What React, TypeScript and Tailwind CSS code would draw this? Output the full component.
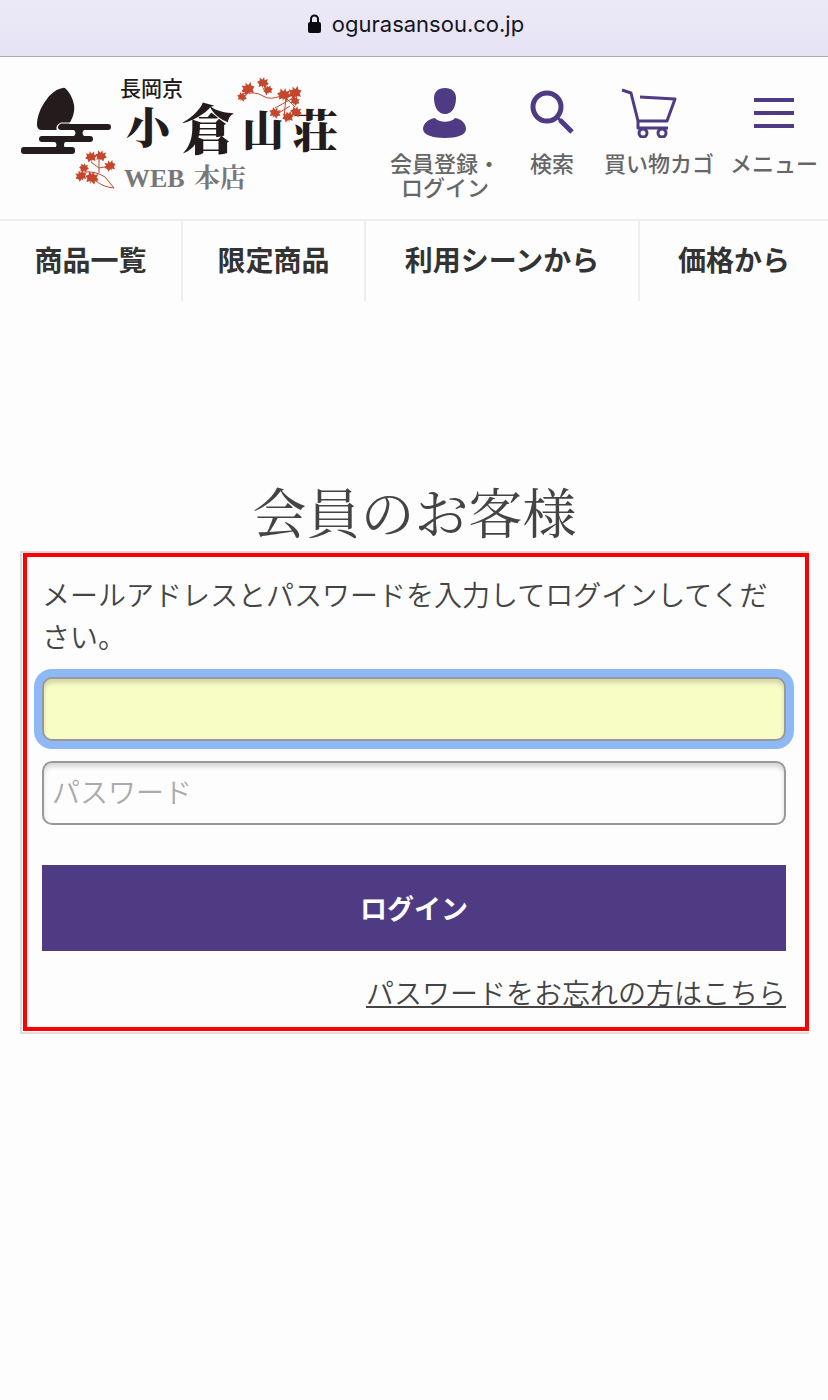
import { useState } from 'react'

const categories = ['商品一覧', '限定商品', '利用シーンから', '価格から']

function Leaf({ x, y, r = 0, s = 6 }: { x: number; y: number; r?: number; s?: number }) {
  return (
    <path
      d="M0-10 2-5 7-8 6-3 10 0 6 3 6 8 1 5 0 9-1 5-6 8-6 3-10 0-6-3-7-8-2-5Z"
      fill="#c4472b"
      transform={`translate(${x} ${y}) rotate(${r}) scale(${s / 10})`}
    />
  )
}

function Logo() {
  return (
    <svg viewBox="0 0 320 120" className="w-80 h-30 shrink-0" role="img" aria-label="長岡京 小倉山荘 WEB本店">
      {/* hill and mist */}
      <g fill="#231b1c">
        <path d="M43 15C37 16 31 20 27 26C20 35 17 44 17 52Q17 57 22 57H37V53Q38 51 41 51H49C53 45 55 38 54 32C53 25 49 19 46 16Q44 14 43 15Z" />
        <rect x="38" y="51" width="53" height="6" rx="3" />
        <rect x="19" y="63" width="54" height="6" rx="3" />
        <rect x="1" y="74" width="54" height="7" rx="3" />
        <path d="M54 57H64Q61 60 64 63H54Q57 60 54 57ZM35 69H45Q43 72 45 75H35Q38 72 35 69Z" />
      </g>
      <path d="M37 58V54Q38 51 41 50H52" fill="none" stroke="#fdfdfd" />

      <g fill="#231b1c">
        <text x="100" y="23" fontSize="21" fontWeight="500" className="font-['Noto_Sans_CJK_JP',sans-serif]">
          長岡京
        </text>
        <g fontWeight="900" className="font-['Noto_Serif_CJK_JP','Noto_Sans_CJK_JP',serif]">
          <text x="106" y="71" fontSize="44">小</text>
          <text x="161" y="77" fontSize="54">倉</text>
          <text x="222" y="73" fontSize="42">山</text>
          <text x="273" y="75" fontSize="45">荘</text>
        </g>
      </g>

      {/* maple branches */}
      <g fill="none" stroke="#c4472b">
        <path d="M222 21Q236 18 243 23T263 22L275 34M243 15 247 22M266 23 264 46M255 35 275 24M257 41 270 33" />
        <path d="M71 89 79 95 90 93M64 99Q76 98 85 104L94 115Q83 114 76 108M79 85V100" />
      </g>
      <Leaf x={243} y={10} r={10} s={6} />
      <Leaf x={228} y={16} r={-20} s={7} />
      <Leaf x={222} y={24} r={20} s={5} />
      <Leaf x={248} y={17} r={-15} s={5} />
      <Leaf x={264} y={22} r={12} s={7} />
      <Leaf x={275} y={20} r={-20} s={7} />
      <Leaf x={275} y={28} r={30} s={5} />
      <Leaf x={255} y={40} r={24} s={6} />
      <Leaf x={276} y={39} r={15} s={6} />
      <Leaf x={268} y={44} r={-15} s={6} />
      <Leaf x={71} y={84} r={-12} s={6} />
      <Leaf x={81} y={83} r={14} s={6} />
      <Leaf x={90} y={93} r={-20} s={6} />
      <Leaf x={64} y={95} r={10} s={5} />
      <Leaf x={61} y={103} r={-25} s={6} />
      <Leaf x={72} y={105} r={18} s={7} />

      <g fill="#777" fontWeight="700" className="font-['Liberation_Serif','Noto_Serif_CJK_JP','Noto_Sans_CJK_JP',serif]">
        <text x="104" y="114" fontSize="26">WEB</text>
        <text x="174" y="114" fontSize="26">本店</text>
      </g>
    </svg>
  )
}

function UserIcon() {
  return (
    <svg viewBox="0 0 44 50" className="w-11 h-[50px]" fill="#4e3b84" aria-hidden="true">
      <path d="M22 0C29 0 33 4 33 10 33 19 29 26 22 26S11 19 11 10C11 4 15 0 22 0Z" />
      <path d="M12 30C16 35 28 35 32 30 39 31 43 36 43 41 43 47 34 50 22 50S0 47 0 41C0 36 5 31 12 30Z" />
    </svg>
  )
}

function SearchIcon() {
  return (
    <svg viewBox="0 0 44 50" className="w-11 h-[50px]" fill="none" stroke="#4e3b84" aria-hidden="true">
      <circle cx="17" cy="19" r="14" strokeWidth="5" />
      <path d="M27 29 32 34" strokeWidth="3" />
      <path d="M30 32 42 44" strokeWidth="5" />
    </svg>
  )
}

function CartIcon() {
  return (
    <svg viewBox="0 0 56 50" className="w-14 h-[50px] mr-5" fill="none" stroke="#4e3b84" strokeWidth="3" aria-hidden="true">
      <path d="M1 2 10 5 17 33H46L54 11 19 9M17 33V40H47" strokeLinejoin="round" />
      <circle cx="22" cy="45" r="4" />
      <circle cx="41" cy="45" r="4" />
    </svg>
  )
}

function MenuIcon() {
  return (
    <svg viewBox="0 0 40 50" className="w-10 h-[50px]" fill="#4e3b84" aria-hidden="true">
      <path d="M0 10H40V14H0ZM0 23H40V27H0ZM0 36H40V40H0Z" />
    </svg>
  )
}

export default function App() {
  const [email, setEmail] = useState('')
  const [password, setPassword] = useState('')

  return (
    <div className="min-h-screen bg-[#fdfdfd] text-[#444] font-['Noto_Sans_CJK_JP',sans-serif]">
      <div className="h-[57px] flex items-center justify-center gap-[10px] pl-1 pb-2 border-b border-[#aaa] bg-linear-to-b from-[#ebe9f7] to-[#e7e3f4]">
        <svg viewBox="0 0 14 20" className="w-3.5 h-5" aria-hidden="true">
          <rect y="8" width="13" height="11" rx="2" fill="#0a0a0f" />
          <path d="M3 9V5a3.5 3.5 0 0 1 7 0V9" fill="none" stroke="#0a0a0f" strokeWidth="2" />
        </svg>
        <span className="text-[22px] text-[#15151c] font-['Inter',sans-serif]">ogurasansou.co.jp</span>
      </div>

      <header className="flex justify-between items-start pl-5 pr-[10px] pb-[21px] border-b-2 border-[#eee]">
        <a href="#" className="pt-4">
          <Logo />
        </a>
        <ul className="flex gap-4 pt-[31px] text-[22px] leading-6 font-medium text-[#666] text-center whitespace-nowrap">
          <li>
            <a href="#" className="flex flex-col items-center gap-3">
              <UserIcon />
              <span>会員登録・<br />ログイン</span>
            </a>
          </li>
          <li className="px-[14px]">
            <a href="#" className="flex flex-col items-center gap-3">
              <SearchIcon />
              <span>検索</span>
            </a>
          </li>
          <li>
            <a href="#" className="flex flex-col items-center gap-3">
              <CartIcon />
              <span>買い物カゴ</span>
            </a>
          </li>
          <li>
            <button type="button" className="flex flex-col items-center gap-3">
              <MenuIcon />
              <span>メニュー</span>
            </button>
          </li>
        </ul>
      </header>

      <nav className="grid grid-cols-[183fr_183fr_274fr_188fr]">
        {categories.map((name) => (
          <a
            key={name}
            href="#"
            className="h-20 flex items-center justify-center pb-1 text-[28px] font-bold text-[#333] whitespace-nowrap border-r-2 border-[#eee] last:border-r-0"
          >
            {name}
          </a>
        ))}
      </nav>

      <main className="pt-[174px] pb-20 pl-5 pr-[19px]">
        <h1 className="pb-1 text-[54px] leading-[72px] text-center font-normal font-['Noto_Serif_CJK_JP','Noto_Sans_CJK_JP',serif]">
          会員のお客様
        </h1>
        <div className="border-2 border-r-0 border-[#ddd] pl-px pb-px">
          <form
            onSubmit={(e) => e.preventDefault()}
            className="flex flex-col border-4 border-[#f00] pt-4 pb-[14px] pl-[15px] pr-[19px] text-[28px] leading-[42px] font-[350]"
          >
            <p>メールアドレスとパスワードを入力してログインしてください。</p>
            <input
              type="email"
              aria-label="メールアドレス"
              value={email}
              onChange={(e) => setEmail(e.target.value)}
              className="mt-5 h-16 px-2 rounded-[10px] border-2 border-[#999] bg-[#f8fcc5] outline-none ring-8 ring-[#8fb8f6] inset-shadow-[0_4px_4px_rgba(0,0,0,0.15)]"
            />
            <input
              type="password"
              aria-label="パスワード"
              value={password}
              onChange={(e) => setPassword(e.target.value)}
              placeholder="パスワード"
              className="mt-5 h-16 px-2 pb-1 rounded-[10px] border-2 border-[#999] bg-[#fdfdfd] placeholder:text-[#aaa] outline-none inset-shadow-[0_4px_4px_rgba(0,0,0,0.15)]"
            />
            <button type="submit" className="mt-10 h-[86px] bg-[#4e3b84] text-white text-[27px] font-bold">
              ログイン
            </button>
            <a href="#" className="mt-5 self-end underline decoration-2 underline-offset-2">
              パスワードをお忘れの方はこちら
            </a>
          </form>
        </div>
      </main>
    </div>
  )
}
